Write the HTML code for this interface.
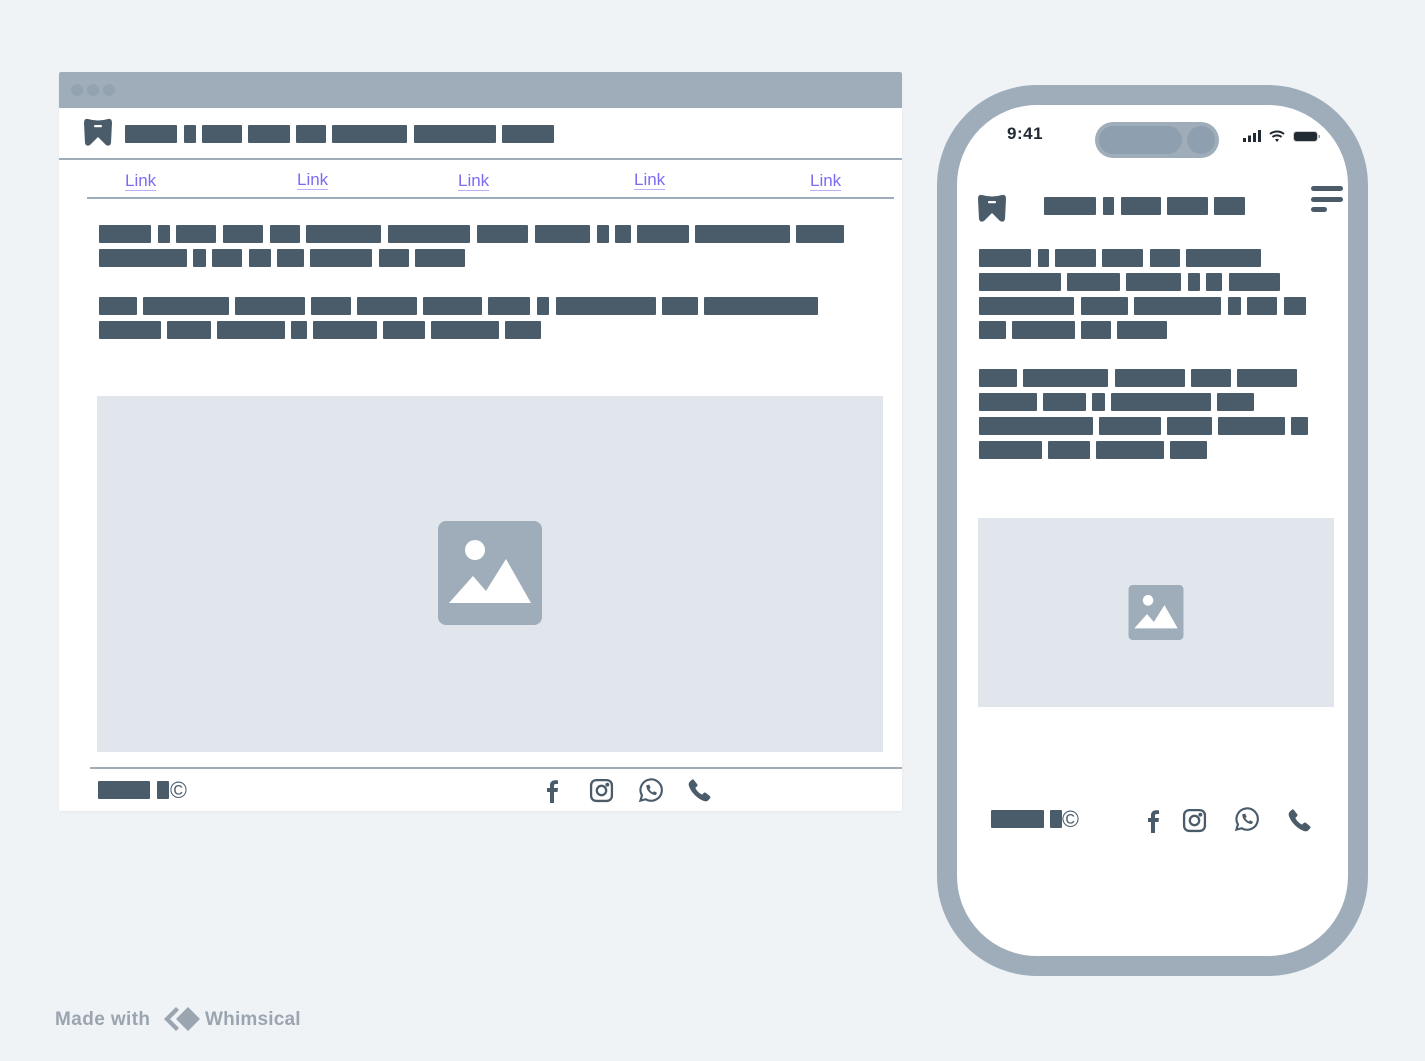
<!DOCTYPE html>
<html><head><meta charset="utf-8"><style>
body{margin:0;width:1425px;height:1061px;background:#eff3f6;position:relative;overflow:hidden;font-family:"Liberation Sans",sans-serif}
.a{position:absolute}
.b{position:absolute;background:#4a5b6a;height:18px;border-radius:1px}
.lk{position:absolute;top:171px;color:#7c6cf2;font-size:17px;text-decoration:underline;text-decoration-color:#b9b0f7;text-underline-offset:4px}
</style></head><body>
<!-- desktop -->
<div class="a" style="left:59px;top:72px;width:843px;height:739px;background:#fff;box-shadow:0 1px 2px rgba(0,0,0,.05)"></div>
<div class="a" style="left:59px;top:72px;width:843px;height:36px;background:#9eadb9;border-radius:2px 2px 0 0"></div>
<div class="a" style="left:71px;top:84px;width:12px;height:12px;border-radius:50%;background:#93a3b0"></div>
<div class="a" style="left:87px;top:84px;width:12px;height:12px;border-radius:50%;background:#93a3b0"></div>
<div class="a" style="left:103px;top:84px;width:12px;height:12px;border-radius:50%;background:#93a3b0"></div>
<svg class="a" style="left:83px;top:117px" width="30" height="30" viewBox="0 0 30 30"><path d="M5 2 Q15 5 25 2 Q29 1 29 6 L28 26 Q27 30 23 28 L15 20 L7 28 Q3 30 2 26 L1 6 Q1 1 5 2Z" fill="#4a5b6a"/><rect x="11" y="8" width="8" height="2.2" rx="1" fill="#fff"/></svg>
<div class="b" style="top:125px;left:125px;width:52px"></div><div class="b" style="top:125px;left:184px;width:12px"></div><div class="b" style="top:125px;left:202px;width:40px"></div><div class="b" style="top:125px;left:248px;width:42px"></div><div class="b" style="top:125px;left:296px;width:30px"></div><div class="b" style="top:125px;left:332px;width:75px"></div><div class="b" style="top:125px;left:414px;width:82px"></div><div class="b" style="top:125px;left:502px;width:52px"></div>
<div class="a" style="left:59px;top:158px;width:843px;height:2px;background:#9eadb9"></div>
<span class="lk" style="left:125px">Link</span><span class="lk" style="left:297px;top:170px">Link</span><span class="lk" style="left:458px">Link</span><span class="lk" style="left:634px;top:170px">Link</span><span class="lk" style="left:810px">Link</span>
<div class="a" style="left:87px;top:197px;width:807px;height:2px;background:#9eadb9"></div>
<div class="b" style="top:225px;left:99px;width:52px"></div><div class="b" style="top:225px;left:158px;width:12px"></div><div class="b" style="top:225px;left:176px;width:40px"></div><div class="b" style="top:225px;left:223px;width:40px"></div><div class="b" style="top:225px;left:270px;width:30px"></div><div class="b" style="top:225px;left:306px;width:75px"></div><div class="b" style="top:225px;left:388px;width:82px"></div><div class="b" style="top:225px;left:477px;width:51px"></div><div class="b" style="top:225px;left:535px;width:55px"></div><div class="b" style="top:225px;left:597px;width:12px"></div><div class="b" style="top:225px;left:615px;width:16px"></div><div class="b" style="top:225px;left:637px;width:52px"></div><div class="b" style="top:225px;left:695px;width:95px"></div><div class="b" style="top:225px;left:796px;width:48px"></div>
<div class="b" style="top:249px;left:99px;width:88px"></div><div class="b" style="top:249px;left:193px;width:13px"></div><div class="b" style="top:249px;left:212px;width:30px"></div><div class="b" style="top:249px;left:249px;width:22px"></div><div class="b" style="top:249px;left:277px;width:27px"></div><div class="b" style="top:249px;left:310px;width:62px"></div><div class="b" style="top:249px;left:379px;width:30px"></div><div class="b" style="top:249px;left:415px;width:50px"></div>
<div class="b" style="top:297px;left:99px;width:38px"></div><div class="b" style="top:297px;left:143px;width:86px"></div><div class="b" style="top:297px;left:235px;width:70px"></div><div class="b" style="top:297px;left:311px;width:40px"></div><div class="b" style="top:297px;left:357px;width:60px"></div><div class="b" style="top:297px;left:423px;width:59px"></div><div class="b" style="top:297px;left:488px;width:42px"></div><div class="b" style="top:297px;left:537px;width:12px"></div><div class="b" style="top:297px;left:556px;width:100px"></div><div class="b" style="top:297px;left:662px;width:36px"></div><div class="b" style="top:297px;left:704px;width:114px"></div>
<div class="b" style="top:321px;left:99px;width:62px"></div><div class="b" style="top:321px;left:167px;width:44px"></div><div class="b" style="top:321px;left:217px;width:68px"></div><div class="b" style="top:321px;left:291px;width:16px"></div><div class="b" style="top:321px;left:313px;width:64px"></div><div class="b" style="top:321px;left:383px;width:42px"></div><div class="b" style="top:321px;left:431px;width:68px"></div><div class="b" style="top:321px;left:505px;width:36px"></div>
<div class="a" style="left:97px;top:396px;width:786px;height:356px;background:#e1e6ed"></div>
<svg class="a" style="left:438px;top:521px" width="104" height="104" viewBox="0 0 104 104"><rect width="104" height="104" rx="8" fill="#9eadb9"/><circle cx="37" cy="29" r="10" fill="#fff"/><path d="M11 82 L35 55 L48 70 L68 38 L93 82Z" fill="#fff"/></svg>
<div class="a" style="left:90px;top:767px;width:812px;height:2px;background:#9eadb9"></div>
<div class="b" style="top:781px;left:98px;width:52px"></div><div class="b" style="top:781px;left:157px;width:12px"></div>
<div class="a" style="left:170px;top:777px;font-size:23px;color:#4a5b6a">©</div>
<svg class="a" style="left:540px;top:778px" width="24" height="26" viewBox="0 0 24 24"><path d="M14 24V13h3.5l.5-4h-4V6.8c0-1.1.4-1.8 1.9-1.8H18V1.4C17.6 1.3 16.4 1.2 15 1.2c-3 0-5 1.8-5 5.1V9H7v4h3v11z" fill="#4a5b6a"/></svg>
<svg class="a" style="left:589px;top:778px" width="25" height="25" viewBox="0 0 24 24" fill="none" stroke="#4a5b6a" stroke-width="2.2"><rect x="2" y="2" width="20" height="20" rx="5"/><circle cx="12" cy="12" r="4.5"/><circle cx="17.6" cy="6.4" r=".8" fill="#4a5b6a"/></svg>
<svg class="a" style="left:637px;top:777px" width="27" height="27" viewBox="0 0 24 24" fill="none" stroke="#4a5b6a" stroke-width="1.9"><path d="M3 21l1.4-4.6A9.5 9.5 0 1 1 7.8 19.8z"/><path d="M8.5 7.5c0 4 3.5 8 8 8.3l1-1.6-2.3-1.2-1 1c-1.5-.6-3-2.1-3.4-3.5l1-1-1.1-2.4z" fill="#4a5b6a" stroke-width="0.5"/></svg>
<svg class="a" style="left:687px;top:778px" width="25" height="25" viewBox="0 0 24 24"><path d="M6.6 1.8l3.2 4.2c.5.6.4 1.5-.2 2l-1.6 1.4c1 2.6 3.5 5.2 6.5 6.6l1.5-1.6c.5-.6 1.4-.6 2-.2l4 3.2c.6.5.7 1.4.2 2l-1.7 2c-1 1.1-2.7 1.3-4.2.7C9.8 19.7 4.300 14.3 1.9 7.8c-.6-1.6-.3-3.3.8-4.3l1.9-1.8c.6-.5 1.5-.5 2 .1z" fill="#4a5b6a"/></svg>
<!-- phone -->
<div class="a" style="left:937px;top:85px;width:391px;height:851px;border:20px solid #9eadb9;border-radius:100px;background:#fff"></div>
<div class="a" style="left:1007px;top:124px;font-size:17px;font-weight:bold;color:#222b33;letter-spacing:.5px">9:41</div>
<div class="a" style="left:1095px;top:122px;width:124px;height:36px;border-radius:18px;background:#9eadb9"></div>
<div class="a" style="left:1099px;top:126px;width:83px;height:28px;border-radius:14px;background:#8e9faf"></div>
<div class="a" style="left:1187px;top:126px;width:28px;height:28px;border-radius:14px;background:#8e9faf"></div>
<svg class="a" style="left:1242px;top:128px" width="80" height="16" viewBox="0 0 80 16"><rect x="1" y="10" width="3" height="4" fill="#222b33"/><rect x="6" y="7.5" width="3" height="6.5" fill="#222b33"/><rect x="11" y="5" width="3" height="9" fill="#222b33"/><rect x="16" y="2" width="3" height="12" fill="#222b33"/><path d="M28 6a11 11 0 0 1 14 0M30.5 9a7 7 0 0 1 9 0" stroke="#222b33" stroke-width="2" fill="none"/><path d="M33 11.5 L35 14 L37 11.5 Q35 10 33 11.5z" fill="#222b33"/><rect x="51.5" y="3.5" width="24" height="10" rx="3" fill="#222b33" stroke="#ccc"/><rect x="76.5" y="7" width="1.5" height="3" fill="#999"/></svg>
<svg class="a" style="left:977px;top:193px" width="30" height="30" viewBox="0 0 30 30"><path d="M5 2 Q15 5 25 2 Q29 1 29 6 L28 26 Q27 30 23 28 L15 20 L7 28 Q3 30 2 26 L1 6 Q1 1 5 2Z" fill="#4a5b6a"/><rect x="11" y="8" width="8" height="2.2" rx="1" fill="#fff"/></svg>
<div class="b" style="top:197px;left:1044px;width:52px"></div><div class="b" style="top:197px;left:1103px;width:11px"></div><div class="b" style="top:197px;left:1121px;width:40px"></div><div class="b" style="top:197px;left:1167px;width:41px"></div><div class="b" style="top:197px;left:1214px;width:31px"></div>
<div class="a" style="left:1311px;top:186px;width:32px;height:5px;border-radius:3px;background:#4a5b6a"></div>
<div class="a" style="left:1311px;top:197px;width:32px;height:5px;border-radius:3px;background:#4a5b6a"></div>
<div class="a" style="left:1311px;top:207px;width:16px;height:5px;border-radius:3px;background:#4a5b6a"></div>
<div class="b" style="top:249px;left:979px;width:52px"></div><div class="b" style="top:249px;left:1038px;width:11px"></div><div class="b" style="top:249px;left:1055px;width:41px"></div><div class="b" style="top:249px;left:1102px;width:41px"></div><div class="b" style="top:249px;left:1150px;width:30px"></div><div class="b" style="top:249px;left:1186px;width:75px"></div>
<div class="b" style="top:273px;left:979px;width:82px"></div><div class="b" style="top:273px;left:1067px;width:53px"></div><div class="b" style="top:273px;left:1126px;width:55px"></div><div class="b" style="top:273px;left:1188px;width:12px"></div><div class="b" style="top:273px;left:1206px;width:16px"></div><div class="b" style="top:273px;left:1229px;width:51px"></div>
<div class="b" style="top:297px;left:979px;width:95px"></div><div class="b" style="top:297px;left:1081px;width:47px"></div><div class="b" style="top:297px;left:1134px;width:87px"></div><div class="b" style="top:297px;left:1228px;width:13px"></div><div class="b" style="top:297px;left:1247px;width:30px"></div><div class="b" style="top:297px;left:1284px;width:22px"></div>
<div class="b" style="top:321px;left:979px;width:27px"></div><div class="b" style="top:321px;left:1012px;width:63px"></div><div class="b" style="top:321px;left:1081px;width:30px"></div><div class="b" style="top:321px;left:1117px;width:50px"></div>
<div class="b" style="top:369px;left:979px;width:38px"></div><div class="b" style="top:369px;left:1023px;width:85px"></div><div class="b" style="top:369px;left:1115px;width:70px"></div><div class="b" style="top:369px;left:1191px;width:40px"></div><div class="b" style="top:369px;left:1237px;width:60px"></div>
<div class="b" style="top:393px;left:979px;width:58px"></div><div class="b" style="top:393px;left:1043px;width:43px"></div><div class="b" style="top:393px;left:1092px;width:13px"></div><div class="b" style="top:393px;left:1111px;width:100px"></div><div class="b" style="top:393px;left:1217px;width:37px"></div>
<div class="b" style="top:417px;left:979px;width:114px"></div><div class="b" style="top:417px;left:1099px;width:62px"></div><div class="b" style="top:417px;left:1167px;width:45px"></div><div class="b" style="top:417px;left:1218px;width:67px"></div><div class="b" style="top:417px;left:1291px;width:17px"></div>
<div class="b" style="top:441px;left:979px;width:63px"></div><div class="b" style="top:441px;left:1048px;width:42px"></div><div class="b" style="top:441px;left:1096px;width:68px"></div><div class="b" style="top:441px;left:1170px;width:37px"></div>
<div class="a" style="left:978px;top:518px;width:356px;height:189px;background:#e1e6ed"></div>
<svg class="a" style="left:1128px;top:585px" width="56" height="55" viewBox="0 0 104 104"><rect width="104" height="104" rx="8" fill="#9eadb9"/><circle cx="37" cy="29" r="10" fill="#fff"/><path d="M11 82 L35 55 L48 70 L68 38 L93 82Z" fill="#fff"/></svg>
<div class="b" style="top:810px;left:991px;width:53px"></div><div class="b" style="top:810px;left:1050px;width:12px"></div>
<div class="a" style="left:1062px;top:806px;font-size:23px;color:#4a5b6a">©</div>
<svg class="a" style="left:1141px;top:808px" width="24" height="26" viewBox="0 0 24 24"><path d="M14 24V13h3.5l.5-4h-4V6.8c0-1.1.4-1.8 1.9-1.8H18V1.4C17.6 1.3 16.4 1.2 15 1.2c-3 0-5 1.8-5 5.1V9H7v4h3v11z" fill="#4a5b6a"/></svg>
<svg class="a" style="left:1182px;top:808px" width="25" height="25" viewBox="0 0 24 24" fill="none" stroke="#4a5b6a" stroke-width="2.2"><rect x="2" y="2" width="20" height="20" rx="5"/><circle cx="12" cy="12" r="4.5"/><circle cx="17.6" cy="6.4" r=".8" fill="#4a5b6a"/></svg>
<svg class="a" style="left:1233px;top:806px" width="27" height="27" viewBox="0 0 24 24" fill="none" stroke="#4a5b6a" stroke-width="1.9"><path d="M3 21l1.4-4.6A9.5 9.5 0 1 1 7.8 19.8z"/><path d="M8.5 7.5c0 4 3.5 8 8 8.3l1-1.6-2.3-1.2-1 1c-1.5-.6-3-2.1-3.4-3.5l1-1-1.1-2.4z" fill="#4a5b6a" stroke-width="0.5"/></svg>
<svg class="a" style="left:1287px;top:808px" width="25" height="25" viewBox="0 0 24 24"><path d="M6.6 1.8l3.2 4.2c.5.6.4 1.5-.2 2l-1.6 1.4c1 2.6 3.5 5.2 6.5 6.6l1.5-1.6c.5-.6 1.4-.6 2-.2l4 3.2c.6.5.7 1.4.2 2l-1.7 2c-1 1.1-2.7 1.3-4.2.7C9.8 19.7 4.3 14.3 1.9 7.8c-.6-1.600-.3-3.3.8-4.3l1.9-1.8c.6-.5 1.5-.5 2 .1z" fill="#4a5b6a"/></svg>
<!-- made with -->
<div class="a" style="left:55px;top:1009px;font-size:19px;font-weight:bold;color:#9aa5b0;letter-spacing:.4px">Made with</div>
<svg class="a" style="left:162px;top:1005px" width="40" height="28" viewBox="0 0 40 28"><path d="M14 2 L2 14 L14 26 L17 23 L8 14 L17 5Z" fill="#9aa5b0"/><path d="M26 2 L38 14 L26 26 L14 14Z" fill="#9aa5b0"/></svg>
<div class="a" style="left:205px;top:1009px;font-size:19px;font-weight:bold;color:#9aa5b0;letter-spacing:.2px">Whimsical</div>
</body></html>
